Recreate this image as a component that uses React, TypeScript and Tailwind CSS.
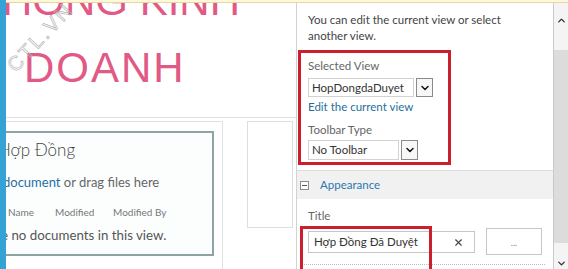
import { ChevronDown, ChevronUp, X } from "lucide-react"

function Select({ value, width, arrow, height }: { value: string; width: string; arrow: string; height: string }) {
    return (
        <div className={`flex ${height}`}>
            <div className={`${width} flex items-center border border-[#d2d2d2] pl-[3px] text-[11.5px] text-[#333]`}>{value}</div>
            <div className={`${arrow} ml-[2px] flex items-center justify-center border border-[#8a8a8a] bg-[#f7f7f7]`}>
                <ChevronDown className="h-[12px] w-[12px] text-[#111]" strokeWidth={3} />
            </div>
        </div>
    )
}

export default function App() {
    return (
        <div className="flex h-[269px] w-[568px] overflow-hidden bg-white font-['Segoe_UI',Lato,sans-serif] text-[#444]">
            {/* blue page edge */}
            <div className="h-full w-[6px] shrink-0 bg-[#35a2d6]" />

            <div className="relative flex flex-1">
                {/* notification strip */}
                <div className="absolute inset-x-0 top-0 z-10 h-[3px] border-b border-[#e6d89c] bg-[#fdf7dc]" />

                {/* Left column */}
                <div className="relative w-[290px] shrink-0 overflow-hidden">
                    <div className="flex h-[118px] flex-col border-b border-[#e2e2e2] font-['Liberation_Sans',Arial,sans-serif] text-[42px] leading-[67px] text-[#e15a86]">
                        <div className="-ml-[32px] mt-[-33px] whitespace-nowrap">PHÒNG KINH</div>
                        <div className="ml-[18px] tracking-[2px]">DOANH</div>
                    </div>

                    {/* watermark */}
                    <div className="absolute left-[-16px] top-[26px] w-[100px] -rotate-[47deg] text-center font-['Liberation_Sans',Arial,sans-serif] text-[20px] leading-[22px] tracking-[2.5px] text-transparent [-webkit-text-stroke:0.7px_#b5b5b5]">
                        CTL.VN
                    </div>

                    <div className="mt-[3px] flex">
                        <div className="h-[150px] w-[217px] border-r border-t border-[#e0e0e0] pt-[9px]">
                            <div className="-ml-[2px] h-[125px] w-[210px] border-2 border-[#8ea4a4] bg-[#fcfefe]">
                                <div className="-ml-[8px] pt-[5px] text-[17px] font-light leading-[24px] text-[#444]">Hợp Đồng</div>
                                <div className="-ml-[3px] mt-[11px] text-[13px] leading-[18px] text-[#666]">
                                    <span className="text-[#1f6fa3]">document</span> or drag files here
                                </div>
                                <div className="mt-[14px] flex text-[10px] leading-[14px] text-[#777]">
                                    <span className="ml-[2px] w-[47px]">Name</span>
                                    <span className="w-[58px]">Modified</span>
                                    <span>Modified By</span>
                                </div>
                                <div className="-ml-[5px] mt-[7px] text-[13.3px] leading-[18px] text-[#555]">e no documents in this view.</div>
                            </div>
                        </div>
                        <div className="ml-[24px] h-[107px] w-[46px] border border-[#dedede]" />
                    </div>
                </div>

                {/* Right tool pane */}
                <div className="w-[257px] shrink-0 border-l border-[#d2d2d2] pt-[12px]">
                    <p className="pl-[11px] text-[11.5px] leading-[16px] text-[#444]">
                        You can edit the current view or select
                        <br />
                        another view.
                    </p>

                    <div className="ml-[1px] mt-[6px] h-[115px] w-[153px] border-[3px] border-[#cc1f2e] px-[7px] pt-[5px]">
                        <div className="text-[11.5px] leading-[16px] text-[#666]">Selected View</div>
                        <div className="mt-[4px]">
                            <Select value="HopDongdaDuyet" width="w-[106px]" arrow="w-[17px]" height="h-[19px]" />
                        </div>
                        <div className="mt-[2px] text-[11.5px] leading-[16px] text-[#1f6e9c]">Edit the current view</div>
                        <div className="mt-[7px] text-[11.5px] leading-[16px] text-[#666]">Toolbar Type</div>
                        <div className="mt-[2px]">
                            <Select value="No Toolbar" width="w-[91px]" arrow="w-[17px]" height="h-[20px]" />
                        </div>
                    </div>

                    <div className="mt-[5px] flex h-[29px] items-center border-t border-[#dcdcdc] bg-[#f1f1f1] pl-[3px]">
                        <div className="flex h-[9px] w-[9px] items-center justify-center border border-[#8c8c8c] bg-white">
                            <div className="h-[1px] w-[5px] bg-[#555]" />
                        </div>
                        <span className="ml-[11px] text-[11.5px] leading-[16px] text-[#2a79ad]">Appearance</span>
                    </div>

                    <div className="mt-[9px] pl-[11px] text-[11.5px] leading-[16px] text-[#666]">Title</div>

                    <div className="relative mt-[4px] flex items-start pl-[11px]">
                        <div className="mt-[3px] flex h-[22px] w-[167px] items-center justify-between border border-[#c6c6c6] px-[5px] text-[11.5px] text-[#333]">
                            <span>Hợp Đồng Đã Duyệt</span>
                            <X className="mr-[5px] h-[11px] w-[11px] text-[#444]" strokeWidth={2.5} />
                        </div>
                        <div className="ml-[11px] flex h-[27px] w-[56px] items-center justify-center border border-[#c6c6c6] pt-[3px] text-[9px] text-[#888]">
                            ...
                        </div>
                        {/* highlight */}
                        <div className="absolute left-[3px] top-[-2px] h-[50px] w-[132px] border-[3px] border-[#cc1f2e]" />
                    </div>

                    <div className="ml-[3px] mt-[9px] w-[245px] border-t border-dotted border-[#bdbdbd]" />
                </div>

                {/* Scrollbar */}
                <div className="flex w-[15px] shrink-0 flex-col items-center border-l border-[#c9c9c9] bg-[#f4f4f4]">
                    <ChevronUp className="mt-[15px] h-[11px] w-[11px] text-[#333]" strokeWidth={3} />
                    <div className="mt-[24px] h-[193px] w-full bg-[#dcdcdc]" />
                    <ChevronDown className="mt-[15px] h-[11px] w-[11px] text-[#333]" strokeWidth={3} />
                </div>
            </div>
        </div>
    )
}
